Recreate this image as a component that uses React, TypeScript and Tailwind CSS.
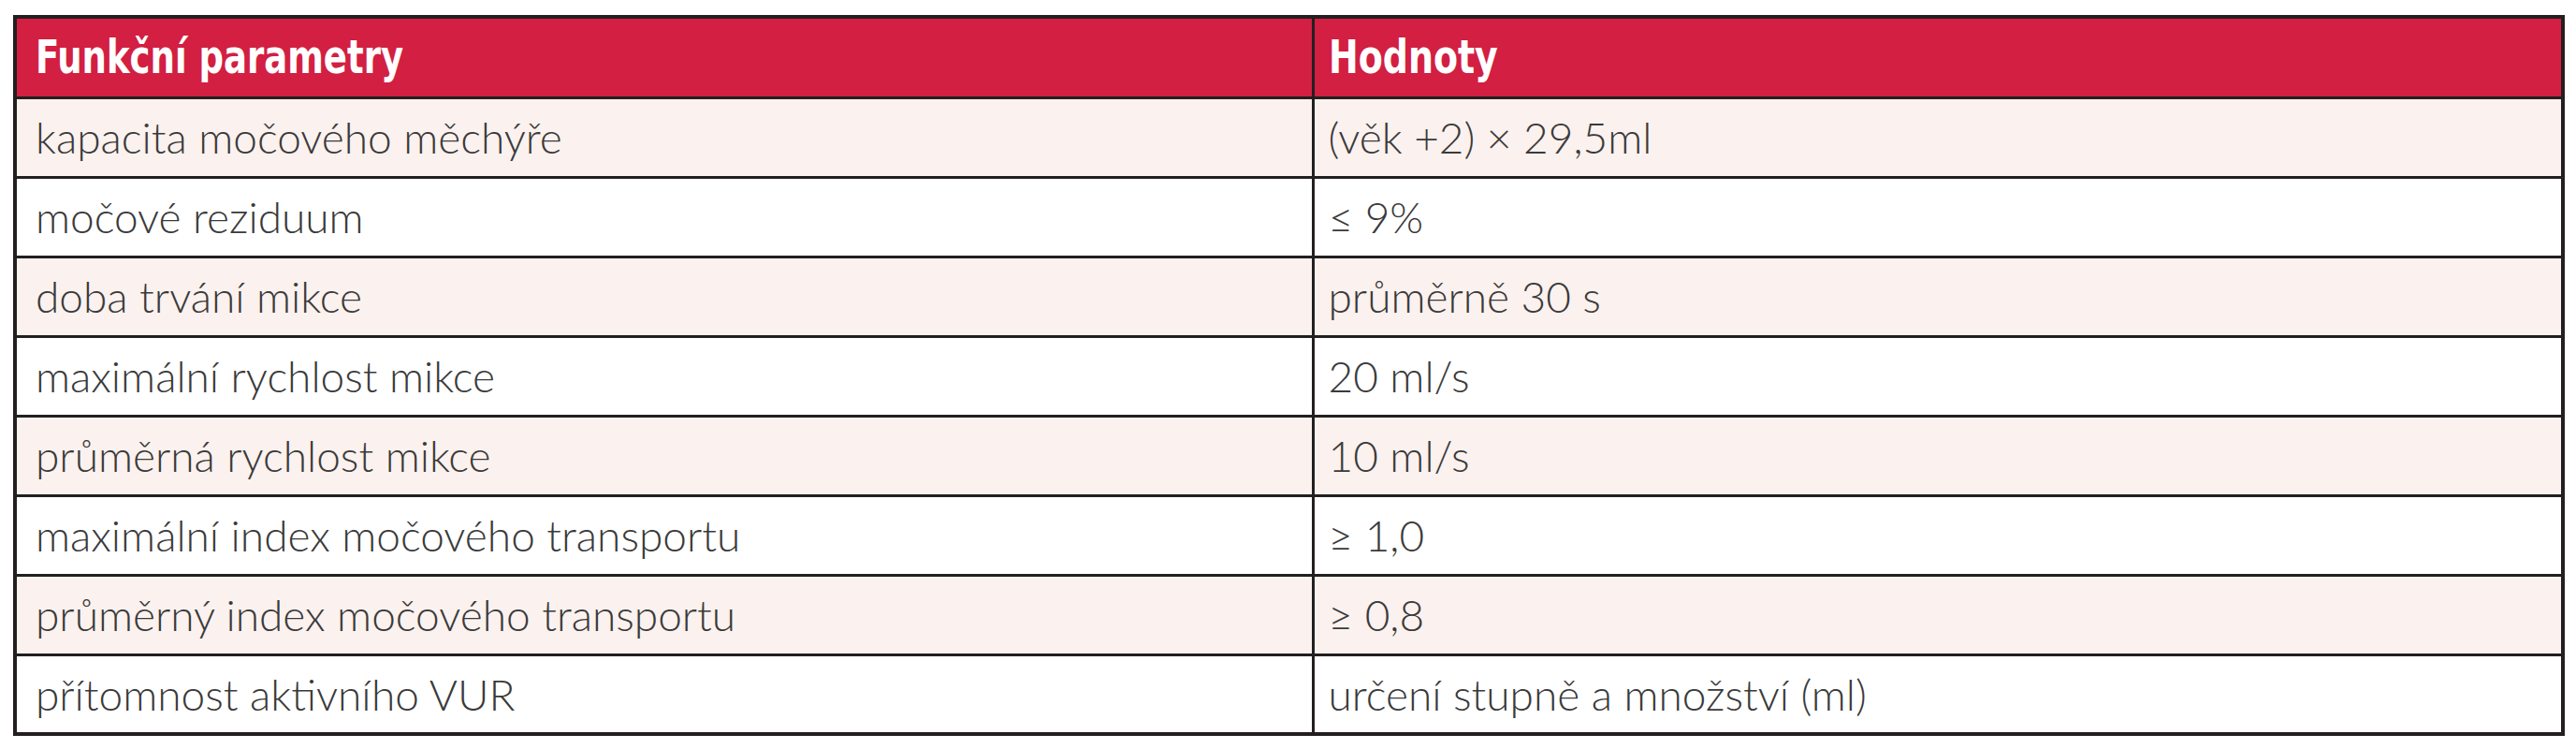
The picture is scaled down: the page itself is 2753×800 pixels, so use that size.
export default function App() {
  const rows = [
    ["kapacita močového měchýře", "(věk +2) × 29,5ml"],
    ["močové reziduum", "≤ 9%"],
    ["doba trvání mikce", "průměrně 30 s"],
    ["maximální rychlost mikce", "20 ml/s"],
    ["průměrná rychlost mikce", "10 ml/s"],
    ["maximální index močového transportu", "≥ 1,0"],
    ["průměrný index močového transportu", "≥ 0,8"],
    ["přítomnost aktivního VUR", "určení stupně a množství (ml)"],
  ];

  return (
    <div className="min-h-screen bg-white pt-[16px] pl-[14px]">
      <table className="w-[2727px] table-fixed border-collapse border-[4px] border-[#231f20]">
        <colgroup>
          <col className="w-[1387px]" />
          <col />
        </colgroup>
        <thead>
          <tr className="bg-[#d21f42] text-white">
            <th className="h-[86px] border-[3px] border-[#231f20] pl-[20px] text-left align-middle font-['Liberation_Sans_Narrow','DejaVu_Sans_Condensed','Liberation_Sans',sans-serif] text-[49px] font-bold">
              <span className="inline-block origin-left scale-x-[0.84]">Funkční parametry</span>
            </th>
            <th className="h-[86px] border-[3px] border-[#231f20] pl-[15px] text-left align-middle font-['Liberation_Sans_Narrow','DejaVu_Sans_Condensed','Liberation_Sans',sans-serif] text-[49px] font-bold">
              <span className="inline-block origin-left scale-x-[0.86]">Hodnoty</span>
            </th>
          </tr>
        </thead>
        <tbody>
          {rows.map((row, i) => (
            <tr key={i} className={i % 2 === 0 ? "bg-[#fbf1ee]" : "bg-white"}>
              <td className="h-[85px] border-[3px] border-[#231f20] pl-[20px] align-middle font-['Lato','Open_Sans',sans-serif] text-[46px] font-light text-[#3a3a3a]">
                {row[0]}
              </td>
              <td className="h-[85px] border-[3px] border-[#231f20] pl-[15px] align-middle font-['Lato','Open_Sans',sans-serif] text-[46px] font-light text-[#3a3a3a]">
                {row[1]}
              </td>
            </tr>
          ))}
        </tbody>
      </table>
    </div>
  );
}
